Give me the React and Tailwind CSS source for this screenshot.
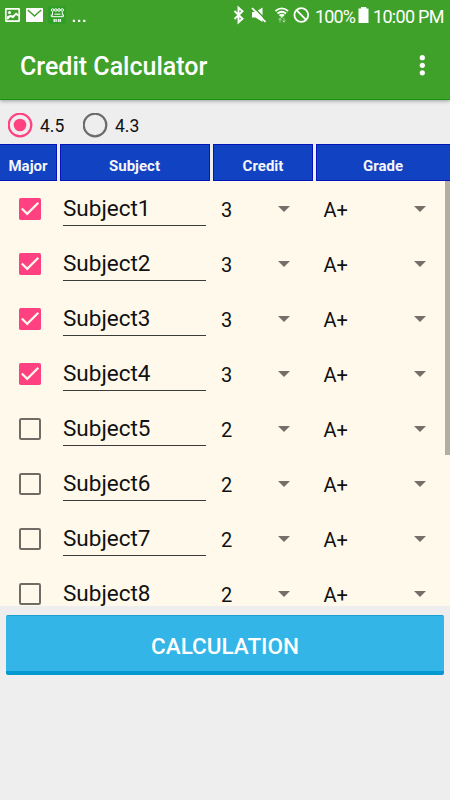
import { useState } from 'react';

const SUBJECTS = [
  { name: 'Subject1', major: true, credit: 3, grade: 'A+' },
  { name: 'Subject2', major: true, credit: 3, grade: 'A+' },
  { name: 'Subject3', major: true, credit: 3, grade: 'A+' },
  { name: 'Subject4', major: true, credit: 3, grade: 'A+' },
  { name: 'Subject5', major: false, credit: 2, grade: 'A+' },
  { name: 'Subject6', major: false, credit: 2, grade: 'A+' },
  { name: 'Subject7', major: false, credit: 2, grade: 'A+' },
  { name: 'Subject8', major: false, credit: 2, grade: 'A+' },
];

function StatusBar() {
  return (
    <div className="flex h-8 items-center justify-between text-white">
      <svg width="100" height="32" viewBox="0 0 100 32" fill="none">
        {/* picture */}
        <rect x="5.8" y="8.8" width="13.4" height="12.4" rx="0.5" stroke="#fff" strokeWidth="1.7" />
        <path d="M7 16.5l3-1.5 3 .5 3-3 2.5 2v2l-2.5-1.5-3 3.500-2.500-1.500-2.500 2.500H7z" fill="#fff" />
        <circle cx="9.5" cy="12.5" r="1.5" fill="#fff" />
        {/* mail */}
        <rect x="26" y="8" width="17" height="14" rx="0.8" fill="#fff" />
        <path d="M27.8 10l6.7 6 6.7-6" stroke="#3fa12a" strokeWidth="1.5" />
        {/* store */}
        <rect x="48" y="6" width="18" height="18" rx="2" fill="#2f9e27" />
        <g stroke="#fff" strokeWidth="1">
          <circle cx="52.6" cy="10" r="1.3" />
          <circle cx="55.8" cy="10" r="1.3" />
          <circle cx="59" cy="10" r="1.3" />
          <circle cx="62.2" cy="10" r="1.3" />
          <path d="M52.5 12v3.500M62.300 12v3.500M54.500 14.200h6M51.300 16.700h12.200" />
          <path d="M51.300 14.500v2M63.500 14.500v2" />
        </g>
        <path d="M53.500 20.400h3.300M57.800 20.400h3.300" stroke="#fff" strokeWidth="3" strokeDasharray="1.600 0.400" opacity="0.9" />
        {/* more */}
        <path d="M72.800 20.800h2.200M78 20.800h2.200M83.200 20.800h2.200" stroke="#fff" strokeWidth="2.200" />
      </svg>
      <div className="flex items-center">
        <svg width="80" height="32" viewBox="0 0 80 32" fill="none" stroke="#fff" className="overflow-visible">
          {/* bluetooth */}
          <path d="M-0.500 11l8 7.800-4 3.500V7.700l4 3.500-8 7.800" strokeWidth="1.900" />
          {/* muted speaker */}
          <path d="M17 12h3.500l7-4.500v14.500l-7-4.500H17z" fill="#fff" stroke="none" />
          <path d="M18.500 7L32 21" stroke="#3fa12a" strokeWidth="1.500" />
          <path d="M17 8l13.500 14" strokeWidth="1.800" />
          {/* wifi */}
          <path d="M40.500 11q6.300-5.300 12.600 0M42.500 13.500q4.300-3.600 8.600 0M44.500 15.800q2.300-2 4.600 0" strokeWidth="1.800" />
          <path d="M45.300 16.300h3l-1.500 2z" fill="#fff" stroke="none" />
          <path d="M45 22.500v-4M49 18v4M43.500 20l1.500-1.700 1.500 1.700M47.500 20.500l1.500 1.700 1.500-1.700" opacity="0.5" />
          {/* blocked */}
          <circle cx="66.300" cy="15" r="6.900" strokeWidth="1.800" />
          <path d="M61.500 10.200l9.600 9.600" strokeWidth="1.800" />
        </svg>
        <span className="w-[41px] whitespace-nowrap text-[18px] tracking-[-0.9px]">100%</span>
        <svg width="17" height="32" viewBox="0 0 17 32" fill="#fff">
          <path d="M5 7h5.300v1.600h2.200V23H2.500V8.600H5z" />
        </svg>
        <span className="w-[77px] whitespace-nowrap text-[18px] tracking-[-0.7px]">10:00 PM</span>
      </div>
    </div>
  );
}

function Radio({ label, checked, onSelect }) {
  return (
    <button type="button" onClick={onSelect} className="flex w-[75px] items-center gap-[7px]">
      <svg width="25" height="25" viewBox="0 0 25 25" fill="none">
        <circle cx="12" cy="12" r="11.3" stroke={checked ? '#ff4081' : '#6b6b6b'} strokeWidth="2.2" />
        {checked && <circle cx="12" cy="12" r="6.3" fill="#ff4081" />}
      </svg>
      <span className="pt-[2px] text-[17.5px] leading-[25px]">{label}</span>
    </button>
  );
}

function Checkbox({ checked, onToggle }) {
  return (
    <button type="button" onClick={onToggle} className="ml-[19px] h-[22px] w-[22px] shrink-0">
      <svg width="22" height="22" viewBox="0 0 22 22" fill="none" className="block">
        {checked ? (
          <>
            <rect width="22" height="22" rx="1.8" fill="#ff4081" />
            <path d="M2.8 10.5l5.4 5.4L19.3 4.8" stroke="#fff9eb" strokeWidth="2.2" />
          </>
        ) : (
          <rect x="1" y="1" width="20" height="20" rx="1.2" stroke="#6f6c66" strokeWidth="2" />
        )}
      </svg>
    </button>
  );
}

function Spinner({ value, className }) {
  return (
    <div className={`flex shrink-0 items-center justify-between text-[20px] ${className}`}>
      <span className="pt-[2px]">{value}</span>
      <svg width="12" height="6" viewBox="0 0 12 6" fill="#73706a" className="mt-px"><path d="M0 0h12L6 6z" /></svg>
    </div>
  );
}

export default function App() {
  const [scale, setScale] = useState('4.5');
  const [rows, setRows] = useState(SUBJECTS);

  const toggle = (i) => setRows(rows.map((r, n) => (n === i ? { ...r, major: !r.major } : r)));

  return (
    <div className="flex h-[800px] w-[450px] flex-col overflow-hidden bg-[#eeeeee] font-['Roboto',sans-serif] text-[#111111]">
      <header className="h-[100px] shrink-0 border-b border-[#189310] bg-[#3fa12a] shadow-[0_1px_4px_rgba(0,0,0,0.35)]">
        <StatusBar />
        <div className="flex h-[67px] items-center justify-between pr-[25px] pl-[20px] text-white">
          <h1 className="pt-[2px] text-[25px] font-medium">Credit Calculator</h1>
          <svg width="6" height="22" viewBox="0 0 6 22" fill="#fff">
            <circle cx="3.3" cy="2.7" r="2.6" />
            <circle cx="3.3" cy="10.3" r="2.6" />
            <circle cx="3.3" cy="17.8" r="2.6" />
          </svg>
        </div>
      </header>

      <div className="flex h-[44px] shrink-0 items-center pt-[6px] pl-[8px]">
        <Radio label="4.5" checked={scale === '4.5'} onSelect={() => setScale('4.5')} />
        <Radio label="4.3" checked={scale === '4.3'} onSelect={() => setScale('4.3')} />
      </div>

      <div className="grid h-[37px] shrink-0 grid-cols-[57px_150px_100px_134px] gap-[3px] text-[15px] font-bold text-[#f5f5fa]">
        <div className="flex items-center justify-center border border-l-0 border-[#0414ba] bg-[#1042c2] pt-[8px]">Major</div>
        <div className="flex items-center justify-center border border-[#0414ba] bg-[#1042c2] pt-[8px] pr-[1px]">Subject</div>
        <div className="flex items-center justify-center border border-[#0414ba] bg-[#1042c2] pt-[8px]">Credit</div>
        <div className="flex items-center justify-center border border-r-0 border-[#0414ba] bg-[#1042c2] pt-[8px] pr-[1px]">Grade</div>
      </div>

      <div className="flex h-[425px] shrink-0 overflow-hidden bg-[#fff9eb]">
        <div className="flex-1">
          {rows.map((r, i) => (
            <div key={r.name} className="flex h-[55px] items-center">
              <Checkbox checked={r.major} onToggle={() => toggle(i)} />
              <div className="ml-[22px] flex h-[35px] w-[143px] shrink-0 items-center border-b border-[#3c3c3a] pt-[2px] text-[22.5px]">{r.name}</div>
              <Spinner value={r.credit} className="ml-[15px] w-[68.5px]" />
              <Spinner value={r.grade} className="ml-[34px] w-[102.5px]" />
            </div>
          ))}
        </div>
        <div className="h-[274px] w-[5px] bg-[#b2aea4]" />
      </div>

      <button type="button" className="mx-[6px] mt-[9px] h-[60px] shrink-0 rounded-[2px] border-t border-b-4 border-t-[#199fd0] border-b-[#0398cf] bg-[#33b5e7] pt-[6px] text-[22.5px] font-medium text-white">
        CALCULATION
      </button>
    </div>
  );
}
